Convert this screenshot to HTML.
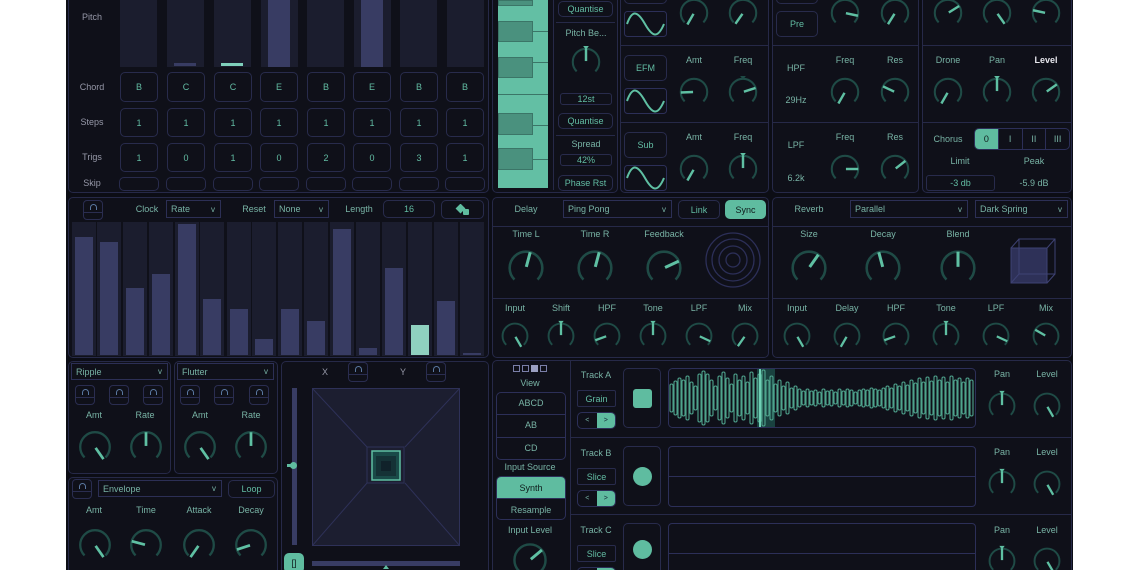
<!DOCTYPE html>
<html><head><meta charset="utf-8"><style>
*{box-sizing:border-box}
html{width:1140px;height:570px;overflow:hidden;background:#fff}
body{margin:0;width:1140px;height:570px;background:#fff;overflow:hidden;font-family:"Liberation Sans",sans-serif;font-size:9px;position:relative}
#app{position:absolute;left:66px;top:0;width:1007px;height:570px;background:#0c0d15}
.a{position:absolute}
.p{position:absolute;border:1px solid #262948;border-radius:5px;background:#0f1019}
.b{position:absolute;border:1px solid #282b4c;border-radius:5px;color:#62bca3;text-align:center;display:flex;align-items:center;justify-content:center;font-size:9px}
.on{background:#5fbca0;color:#0f1a1a;border-color:#5fbca0}
.l{position:absolute;transform:translate(-50%,-50%);white-space:nowrap;color:#78b3a5;font-size:9px}
.g{color:#9698a8}
.w{color:#e8e8ee;font-weight:bold}
.s{position:absolute;border:1px solid #2c2f55;color:#78b3a5;font-size:9px;padding-left:4px;display:flex;align-items:center}
.s:after{content:"v";position:absolute;right:5px;color:#78b3a5;font-size:8px}
.k{position:absolute;overflow:visible}
.k line{stroke:#5fc0a3;stroke-width:2.6;stroke-linecap:butt}
.k .m{fill:#5fc0a3}
.hl{position:absolute;background:#262948}
.mi{position:absolute;width:20px;height:20px;border:1px solid #2a2d50;border-radius:4px}
.mi:before{content:"";position:absolute;left:6px;top:3px;width:5px;height:5px;border:1.5px solid #5a78a0;border-bottom:none;border-radius:4px 4px 0 0}
.mi:after{content:"";position:absolute;left:0;right:0;top:11px;height:7px;border-top:1px solid #2a2d50}
.col{position:absolute;top:222px;height:134px;width:24px;background:#1b1d2e}
.bar{position:absolute;left:3px;right:3px;bottom:1px;background:#383c63}
#clip{position:absolute;left:0;top:0;width:1140px;height:570px;overflow:hidden}
</style></head><body><div id="clip">
<svg width="0" height="0" style="position:absolute"><defs><path id="a" d="M-9.9 9.9A14 14 0 1 1 9.9 9.9" fill="none" stroke="#1f4b46" stroke-width="2.2"/></defs></svg>
<div id="app"></div>

<!-- ===== TOP LEFT SEQUENCER ===== -->
<div class="p" style="left:68px;top:-6px;width:421px;height:199px"></div>
<div class="l g" style="left:92px;top:17px">Pitch</div>
<div class="l g" style="left:92px;top:87px">Chord</div>
<div class="l g" style="left:92px;top:122px">Steps</div>
<div class="l g" style="left:92px;top:157px">Trigs</div>
<div class="l g" style="left:92px;top:183px">Skip</div>
<div class="a" style="left:120px;top:0;width:37px;height:67px;background:#1b1d2e"></div>
<div class="a" style="left:167px;top:0;width:37px;height:67px;background:#1b1d2e"></div>
<div class="a" style="left:214px;top:0;width:37px;height:67px;background:#1b1d2e"></div>
<div class="a" style="left:261px;top:0;width:37px;height:67px;background:#1b1d2e"></div>
<div class="a" style="left:307px;top:0;width:37px;height:67px;background:#1b1d2e"></div>
<div class="a" style="left:354px;top:0;width:37px;height:67px;background:#1b1d2e"></div>
<div class="a" style="left:400px;top:0;width:37px;height:67px;background:#1b1d2e"></div>
<div class="a" style="left:447px;top:0;width:37px;height:67px;background:#1b1d2e"></div>
<div class="a" style="left:268px;top:0;width:22px;height:67px;background:#383c63"></div>
<div class="a" style="left:361px;top:0;width:22px;height:67px;background:#383c63"></div>
<div class="a" style="left:174px;top:63px;width:22px;height:3px;background:#383c63"></div>
<div class="a" style="left:221px;top:63px;width:22px;height:3px;background:#7fd0bb"></div>

<div class="b" style="left:120px;top:72px;width:38px;height:30px">B</div>
<div class="b" style="left:167px;top:72px;width:38px;height:30px">C</div>
<div class="b" style="left:214px;top:72px;width:38px;height:30px">C</div>
<div class="b" style="left:260px;top:72px;width:38px;height:30px">E</div>
<div class="b" style="left:307px;top:72px;width:38px;height:30px">B</div>
<div class="b" style="left:353px;top:72px;width:38px;height:30px">E</div>
<div class="b" style="left:400px;top:72px;width:38px;height:30px">B</div>
<div class="b" style="left:446px;top:72px;width:38px;height:30px">B</div>

<div class="b" style="left:120px;top:108px;width:38px;height:29px">1</div>
<div class="b" style="left:167px;top:108px;width:38px;height:29px">1</div>
<div class="b" style="left:214px;top:108px;width:38px;height:29px">1</div>
<div class="b" style="left:260px;top:108px;width:38px;height:29px">1</div>
<div class="b" style="left:307px;top:108px;width:38px;height:29px">1</div>
<div class="b" style="left:353px;top:108px;width:38px;height:29px">1</div>
<div class="b" style="left:400px;top:108px;width:38px;height:29px">1</div>
<div class="b" style="left:446px;top:108px;width:38px;height:29px">1</div>

<div class="b" style="left:120px;top:143px;width:38px;height:29px">1</div>
<div class="b" style="left:167px;top:143px;width:38px;height:29px">0</div>
<div class="b" style="left:214px;top:143px;width:38px;height:29px">1</div>
<div class="b" style="left:260px;top:143px;width:38px;height:29px">0</div>
<div class="b" style="left:307px;top:143px;width:38px;height:29px">2</div>
<div class="b" style="left:353px;top:143px;width:38px;height:29px">0</div>
<div class="b" style="left:400px;top:143px;width:38px;height:29px">3</div>
<div class="b" style="left:446px;top:143px;width:38px;height:29px">1</div>

<div class="b" style="left:119px;top:177px;width:40px;height:14px"></div>
<div class="b" style="left:166px;top:177px;width:40px;height:14px"></div>
<div class="b" style="left:213px;top:177px;width:40px;height:14px"></div>
<div class="b" style="left:259px;top:177px;width:40px;height:14px"></div>
<div class="b" style="left:306px;top:177px;width:40px;height:14px"></div>
<div class="b" style="left:352px;top:177px;width:40px;height:14px"></div>
<div class="b" style="left:399px;top:177px;width:40px;height:14px"></div>
<div class="b" style="left:445px;top:177px;width:40px;height:14px"></div>

<!-- ===== PIANO ===== -->
<div class="p" style="left:492px;top:-6px;width:126px;height:199px"></div>
<div class="a" style="left:498px;top:0;width:50px;height:188px;background:#63bfa4"></div>
<div class="a" style="left:498px;top:0;width:35px;height:6px;background:#4a917e;border:1px solid #3b7567"></div>
<div class="a" style="left:498px;top:21px;width:35px;height:21px;background:#4a917e;border:1px solid #3b7567"></div>
<div class="a" style="left:498px;top:57px;width:35px;height:21px;background:#4a917e;border:1px solid #3b7567"></div>
<div class="a" style="left:498px;top:113px;width:35px;height:22px;background:#4a917e;border:1px solid #3b7567"></div>
<div class="a" style="left:498px;top:148px;width:35px;height:22px;background:#4a917e;border:1px solid #3b7567"></div>
<div class="a" style="left:533px;top:31px;width:15px;height:1px;background:#3b7567"></div>
<div class="a" style="left:533px;top:62px;width:15px;height:1px;background:#3b7567"></div>
<div class="a" style="left:498px;top:94px;width:50px;height:1px;background:#3b7567"></div>
<div class="a" style="left:533px;top:125px;width:15px;height:1px;background:#3b7567"></div>
<div class="a" style="left:533px;top:159px;width:15px;height:1px;background:#3b7567"></div>
<div class="hl" style="left:553px;top:0;width:1px;height:190px"></div>
<div class="b" style="left:558px;top:1px;width:55px;height:16px">Quantise</div>
<div class="hl" style="left:556px;top:22px;width:59px;height:1px"></div>
<div class="l" style="left:586px;top:33px">Pitch Be...</div>
<svg class="k" style="left:569px;top:45px;width:34px;height:34px" viewBox="-18 -18 36 36"><use href="#a"/><path class="m" d="M-3 -17h6l-3 4z"/><line y1="-1" y2="-14"/></svg>
<div class="b" style="left:560px;top:93px;width:52px;height:12px;border-radius:3px">12st</div>
<div class="b" style="left:558px;top:113px;width:55px;height:16px">Quantise</div>
<div class="hl" style="left:556px;top:135px;width:59px;height:1px"></div>
<div class="l" style="left:586px;top:144px">Spread</div>
<div class="b" style="left:560px;top:154px;width:52px;height:12px;border-radius:3px">42%</div>
<div class="b" style="left:558px;top:175px;width:55px;height:16px">Phase Rst</div>

<!-- ===== OSC ===== -->
<div class="p" style="left:620px;top:-6px;width:149px;height:199px"></div>
<div class="hl" style="left:621px;top:45px;width:147px;height:1px"></div>
<div class="hl" style="left:621px;top:122px;width:147px;height:1px"></div>
<div class="b" style="left:624px;top:-10px;width:43px;height:14px"></div>
<svg class="a" style="left:624px;top:11px" width="43" height="26"><rect x=".5" y=".5" width="42" height="25" rx="3" fill="none" stroke="#2c2f58"/><path d="M3 13C8 -1 13 -1 21 13S34 27 40 13" fill="none" stroke="#5fc0a3" stroke-width="2"/></svg>
<div class="b" style="left:624px;top:55px;width:43px;height:26px">EFM</div>
<svg class="a" style="left:624px;top:88px" width="43" height="26"><rect x=".5" y=".5" width="42" height="25" rx="3" fill="none" stroke="#2c2f58"/><path d="M3 13C8 -1 13 -1 21 13S34 27 40 13" fill="none" stroke="#5fc0a3" stroke-width="2"/></svg>
<div class="b" style="left:624px;top:132px;width:43px;height:26px">Sub</div>
<svg class="a" style="left:624px;top:165px" width="43" height="26"><rect x=".5" y=".5" width="42" height="25" rx="3" fill="none" stroke="#2c2f58"/><path d="M3 13C8 -1 13 -1 21 13S34 27 40 13" fill="none" stroke="#5fc0a3" stroke-width="2"/></svg>
<svg class="k" style="left:677px;top:-4px;width:34px;height:34px" viewBox="-18 -18 36 36"><use href="#a"/><line y1="-1" y2="-14" transform="rotate(-150)"/></svg>
<svg class="k" style="left:726px;top:-4px;width:34px;height:34px" viewBox="-18 -18 36 36"><use href="#a"/><line y1="-1" y2="-14" transform="rotate(-145)"/></svg>
<div class="l" style="left:694px;top:60px">Amt</div><div class="l" style="left:743px;top:60px">Freq</div>
<svg class="k" style="left:677px;top:75px;width:34px;height:34px" viewBox="-18 -18 36 36"><use href="#a"/><line y1="-1" y2="-14" transform="rotate(-92)"/></svg>
<svg class="k" style="left:726px;top:75px;width:34px;height:34px" viewBox="-18 -18 36 36"><use href="#a"/><path d="M-3 -17h6l-3 4z" style="fill:#1f4b46"/><line y1="-1" y2="-14" transform="rotate(72)"/></svg>
<div class="l" style="left:694px;top:137px">Amt</div><div class="l" style="left:743px;top:137px">Freq</div>
<svg class="k" style="left:677px;top:152px;width:34px;height:34px" viewBox="-18 -18 36 36"><use href="#a"/><line y1="-1" y2="-14" transform="rotate(-150)"/></svg>
<svg class="k" style="left:726px;top:152px;width:34px;height:34px" viewBox="-18 -18 36 36"><use href="#a"/><path class="m" d="M-3 -17h6l-3 4z"/><line y1="-1" y2="-14"/></svg>

<!-- ===== FILTER ===== -->
<div class="p" style="left:772px;top:-6px;width:147px;height:199px"></div>
<div class="hl" style="left:773px;top:45px;width:145px;height:1px"></div>
<div class="hl" style="left:773px;top:122px;width:145px;height:1px"></div>
<div class="b" style="left:776px;top:-10px;width:42px;height:14px"></div>
<div class="b" style="left:776px;top:11px;width:42px;height:26px">Pre</div>
<svg class="k" style="left:828px;top:-4px;width:34px;height:34px" viewBox="-18 -18 36 36"><use href="#a"/><line y1="-1" y2="-14" transform="rotate(102)"/></svg>
<svg class="k" style="left:878px;top:-4px;width:34px;height:34px" viewBox="-18 -18 36 36"><use href="#a"/><line y1="-1" y2="-14" transform="rotate(-148)"/></svg>
<div class="l" style="left:796px;top:68px">HPF</div><div class="l" style="left:796px;top:100px">29Hz</div>
<div class="l" style="left:845px;top:60px">Freq</div><div class="l" style="left:895px;top:60px">Res</div>
<svg class="k" style="left:828px;top:75px;width:34px;height:34px" viewBox="-18 -18 36 36"><use href="#a"/><line y1="-1" y2="-14" transform="rotate(-150)"/></svg>
<svg class="k" style="left:878px;top:75px;width:34px;height:34px" viewBox="-18 -18 36 36"><use href="#a"/><line y1="-1" y2="-14" transform="rotate(-65)"/></svg>
<div class="l" style="left:796px;top:145px">LPF</div><div class="l" style="left:796px;top:178px">6.2k</div>
<div class="l" style="left:845px;top:137px">Freq</div><div class="l" style="left:895px;top:137px">Res</div>
<svg class="k" style="left:828px;top:152px;width:34px;height:34px" viewBox="-18 -18 36 36"><use href="#a"/><line y1="-1" y2="-14" transform="rotate(90)"/></svg>
<svg class="k" style="left:878px;top:152px;width:34px;height:34px" viewBox="-18 -18 36 36"><use href="#a"/><line y1="-1" y2="-14" transform="rotate(52)"/></svg>

<!-- ===== OUTPUT ===== -->
<div class="p" style="left:922px;top:-6px;width:150px;height:199px"></div>
<div class="hl" style="left:923px;top:45px;width:148px;height:1px"></div>
<div class="hl" style="left:923px;top:122px;width:148px;height:1px"></div>
<svg class="k" style="left:931px;top:-4px;width:34px;height:34px" viewBox="-18 -18 36 36"><use href="#a"/><line y1="-1" y2="-14" transform="rotate(58)"/></svg>
<svg class="k" style="left:980px;top:-4px;width:34px;height:34px" viewBox="-18 -18 36 36"><use href="#a"/><line y1="-1" y2="-14" transform="rotate(145)"/></svg>
<svg class="k" style="left:1029px;top:-4px;width:34px;height:34px" viewBox="-18 -18 36 36"><use href="#a"/><line y1="-1" y2="-14" transform="rotate(-78)"/></svg>
<div class="l" style="left:948px;top:60px">Drone</div><div class="l" style="left:997px;top:60px">Pan</div><div class="l w" style="left:1046px;top:60px">Level</div>
<svg class="k" style="left:931px;top:75px;width:34px;height:34px" viewBox="-18 -18 36 36"><use href="#a"/><line y1="-1" y2="-14" transform="rotate(-150)"/></svg>
<svg class="k" style="left:980px;top:75px;width:34px;height:34px" viewBox="-18 -18 36 36"><use href="#a"/><path class="m" d="M-3 -17h6l-3 4z"/><line y1="-1" y2="-14"/></svg>
<svg class="k" style="left:1029px;top:75px;width:34px;height:34px" viewBox="-18 -18 36 36"><use href="#a"/><line y1="-1" y2="-14" transform="rotate(55)"/></svg>
<div class="l" style="left:948px;top:139px">Chorus</div>
<div class="a" style="left:974px;top:128px;width:96px;height:22px;border:1px solid #2c2f58;border-radius:5px;display:flex;color:#78b3a5;font-size:9px;overflow:hidden">
<div style="flex:1;background:#5fbca0;color:#0f1a1a;display:flex;align-items:center;justify-content:center">0</div>
<div style="flex:1;border-left:1px solid #2c2f58;display:flex;align-items:center;justify-content:center">I</div>
<div style="flex:1;border-left:1px solid #2c2f58;display:flex;align-items:center;justify-content:center">II</div>
<div style="flex:1;border-left:1px solid #2c2f58;display:flex;align-items:center;justify-content:center">III</div></div>
<div class="l" style="left:960px;top:161px">Limit</div><div class="l" style="left:1034px;top:161px">Peak</div>
<div class="b" style="left:926px;top:175px;width:69px;height:16px;border-radius:3px">-3 db</div>
<div class="l" style="left:1034px;top:183px">-5.9 dB</div>

<!-- ===== LFO ===== -->
<div class="p" style="left:68px;top:197px;width:421px;height:161px"></div>
<div class="mi" style="left:83px;top:200px"></div>
<div class="l" style="left:147px;top:209px">Clock</div>
<div class="s" style="left:166px;top:200px;width:55px;height:18px">Rate</div>
<div class="l" style="left:254px;top:209px">Reset</div>
<div class="s" style="left:274px;top:200px;width:55px;height:18px">None</div>
<div class="l" style="left:359px;top:209px">Length</div>
<div class="b" style="left:383px;top:200px;width:52px;height:18px">16</div>
<div class="b" style="left:441px;top:200px;width:43px;height:19px"><svg width="16" height="12"><rect x="2" y="1" width="7" height="7" transform="rotate(45 5.5 4.5)" fill="#5fbca0"/><rect x="8" y="5" width="6" height="6" rx="1" fill="#5fbca0"/></svg></div>
<div class="col" style="left:72px"><div class="bar" style="top:15px"></div></div>
<div class="col" style="left:97px"><div class="bar" style="top:20px"></div></div>
<div class="col" style="left:123px"><div class="bar" style="top:66px"></div></div>
<div class="col" style="left:149px"><div class="bar" style="top:52px"></div></div>
<div class="col" style="left:175px"><div class="bar" style="top:2px"></div></div>
<div class="col" style="left:200px"><div class="bar" style="top:77px"></div></div>
<div class="col" style="left:227px"><div class="bar" style="top:87px"></div></div>
<div class="col" style="left:252px"><div class="bar" style="top:117px"></div></div>
<div class="col" style="left:278px"><div class="bar" style="top:87px"></div></div>
<div class="col" style="left:304px"><div class="bar" style="top:99px"></div></div>
<div class="col" style="left:330px"><div class="bar" style="top:7px"></div></div>
<div class="col" style="left:356px"><div class="bar" style="top:126px"></div></div>
<div class="col" style="left:382px"><div class="bar" style="top:46px"></div></div>
<div class="col" style="left:408px"><div class="bar" style="top:103px;background:#8fd0bf"></div></div>
<div class="col" style="left:434px"><div class="bar" style="top:79px"></div></div>
<div class="col" style="left:460px"><div class="bar" style="top:131px"></div></div>

<!-- ===== DELAY ===== -->
<div class="p" style="left:492px;top:197px;width:277px;height:161px"></div>
<div class="hl" style="left:493px;top:226px;width:275px;height:1px"></div>
<div class="hl" style="left:493px;top:298px;width:275px;height:1px"></div>
<div class="l" style="left:526px;top:209px">Delay</div>
<div class="s" style="left:563px;top:200px;width:109px;height:18px">Ping Pong</div>
<div class="b" style="left:678px;top:200px;width:42px;height:19px">Link</div>
<div class="b on" style="left:725px;top:200px;width:41px;height:19px">Sync</div>
<div class="l" style="left:526px;top:234px">Time L</div><div class="l" style="left:595px;top:234px">Time R</div><div class="l" style="left:664px;top:234px">Feedback</div>
<svg class="k" style="left:505px;top:247px;width:42px;height:42px" viewBox="-18 -18 36 36"><use href="#a"/><line y1="-1" y2="-14" transform="rotate(15)"/></svg>
<svg class="k" style="left:574px;top:247px;width:42px;height:42px" viewBox="-18 -18 36 36"><use href="#a"/><line y1="-1" y2="-14" transform="rotate(15)"/></svg>
<svg class="k" style="left:643px;top:247px;width:42px;height:42px" viewBox="-18 -18 36 36"><use href="#a"/><line y1="-1" y2="-14" transform="rotate(65)"/></svg>
<svg class="a" style="left:704px;top:231px" width="58" height="58"><g fill="none" stroke="#2c2f58" stroke-width="1.3"><circle cx="29" cy="29" r="27"/><circle cx="29" cy="29" r="21"/><circle cx="29" cy="29" r="14"/><circle cx="29" cy="29" r="7"/></g></svg>
<div class="l" style="left:515px;top:308px">Input</div><div class="l" style="left:561px;top:308px">Shift</div><div class="l" style="left:607px;top:308px">HPF</div><div class="l" style="left:653px;top:308px">Tone</div><div class="l" style="left:699px;top:308px">LPF</div><div class="l" style="left:745px;top:308px">Mix</div>
<svg class="k" style="left:499px;top:320px;width:32px;height:32px" viewBox="-18 -18 36 36"><use href="#a"/><line y1="-1" y2="-14" transform="rotate(150)"/></svg>
<svg class="k" style="left:545px;top:320px;width:32px;height:32px" viewBox="-18 -18 36 36"><use href="#a"/><path class="m" d="M-3 -17h6l-3 4z"/><line y1="-1" y2="-14"/></svg>
<svg class="k" style="left:591px;top:320px;width:32px;height:32px" viewBox="-18 -18 36 36"><use href="#a"/><line y1="-1" y2="-14" transform="rotate(-110)"/></svg>
<svg class="k" style="left:637px;top:320px;width:32px;height:32px" viewBox="-18 -18 36 36"><use href="#a"/><path class="m" d="M-3 -17h6l-3 4z"/><line y1="-1" y2="-14"/></svg>
<svg class="k" style="left:683px;top:320px;width:32px;height:32px" viewBox="-18 -18 36 36"><use href="#a"/><line y1="-1" y2="-14" transform="rotate(115)"/></svg>
<svg class="k" style="left:729px;top:320px;width:32px;height:32px" viewBox="-18 -18 36 36"><use href="#a"/><line y1="-1" y2="-14" transform="rotate(-145)"/></svg>

<!-- ===== REVERB ===== -->
<div class="p" style="left:772px;top:197px;width:300px;height:161px"></div>
<div class="hl" style="left:773px;top:226px;width:298px;height:1px"></div>
<div class="hl" style="left:773px;top:298px;width:298px;height:1px"></div>
<div class="l" style="left:809px;top:209px">Reverb</div>
<div class="s" style="left:850px;top:200px;width:118px;height:18px">Parallel</div>
<div class="s" style="left:975px;top:200px;width:93px;height:18px">Dark Spring</div>
<div class="l" style="left:809px;top:234px">Size</div><div class="l" style="left:883px;top:234px">Decay</div><div class="l" style="left:958px;top:234px">Blend</div>
<svg class="k" style="left:788px;top:247px;width:42px;height:42px" viewBox="-18 -18 36 36"><use href="#a"/><line y1="-1" y2="-14" transform="rotate(35)"/></svg>
<svg class="k" style="left:862px;top:247px;width:42px;height:42px" viewBox="-18 -18 36 36"><use href="#a"/><line y1="-1" y2="-14" transform="rotate(-15)"/></svg>
<svg class="k" style="left:937px;top:247px;width:42px;height:42px" viewBox="-18 -18 36 36"><use href="#a"/><line y1="-1" y2="-14"/></svg>
<svg class="a" style="left:1009px;top:237px" width="48" height="48"><g stroke="#3e4274" stroke-width="1" fill="none"><rect x="2" y="11" width="36" height="35" fill="#2e3158"/><rect x="10" y="2" width="36" height="35"/><path d="M2 11L10 2M38 11L46 2M38 46L46 37M2 46L10 37"/></g></svg>
<div class="l" style="left:797px;top:308px">Input</div><div class="l" style="left:847px;top:308px">Delay</div><div class="l" style="left:896px;top:308px">HPF</div><div class="l" style="left:946px;top:308px">Tone</div><div class="l" style="left:996px;top:308px">LPF</div><div class="l" style="left:1046px;top:308px">Mix</div>
<svg class="k" style="left:781px;top:320px;width:32px;height:32px" viewBox="-18 -18 36 36"><use href="#a"/><line y1="-1" y2="-14" transform="rotate(150)"/></svg>
<svg class="k" style="left:831px;top:320px;width:32px;height:32px" viewBox="-18 -18 36 36"><use href="#a"/><line y1="-1" y2="-14" transform="rotate(-150)"/></svg>
<svg class="k" style="left:880px;top:320px;width:32px;height:32px" viewBox="-18 -18 36 36"><use href="#a"/><line y1="-1" y2="-14" transform="rotate(-110)"/></svg>
<svg class="k" style="left:930px;top:320px;width:32px;height:32px" viewBox="-18 -18 36 36"><use href="#a"/><path class="m" d="M-3 -17h6l-3 4z"/><line y1="-1" y2="-14"/></svg>
<svg class="k" style="left:980px;top:320px;width:32px;height:32px" viewBox="-18 -18 36 36"><use href="#a"/><line y1="-1" y2="-14" transform="rotate(115)"/></svg>
<svg class="k" style="left:1030px;top:320px;width:32px;height:32px" viewBox="-18 -18 36 36"><use href="#a"/><line y1="-1" y2="-14" transform="rotate(-60)"/></svg>

<!-- ===== RIPPLE / FLUTTER ===== -->
<div class="p" style="left:68px;top:361px;width:103px;height:113px"></div>
<div class="p" style="left:174px;top:361px;width:104px;height:113px"></div>
<div class="s" style="left:71px;top:363px;width:97px;height:17px">Ripple</div>
<div class="s" style="left:177px;top:363px;width:97px;height:17px">Flutter</div>
<div class="mi" style="left:75px;top:385px"></div><div class="mi" style="left:109px;top:385px"></div><div class="mi" style="left:143px;top:385px"></div>
<div class="mi" style="left:180px;top:385px"></div><div class="mi" style="left:214px;top:385px"></div><div class="mi" style="left:249px;top:385px"></div>
<div class="l" style="left:94px;top:415px">Amt</div><div class="l" style="left:145px;top:415px">Rate</div>
<div class="l" style="left:200px;top:415px">Amt</div><div class="l" style="left:251px;top:415px">Rate</div>
<svg class="k" style="left:76px;top:428px;width:38px;height:38px" viewBox="-18 -18 36 36"><use href="#a"/><line y1="-1" y2="-14" transform="rotate(145)"/></svg>
<svg class="k" style="left:127px;top:428px;width:38px;height:38px" viewBox="-18 -18 36 36"><use href="#a"/><line y1="-1" y2="-14"/></svg>
<svg class="k" style="left:181px;top:428px;width:38px;height:38px" viewBox="-18 -18 36 36"><use href="#a"/><line y1="-1" y2="-14" transform="rotate(145)"/></svg>
<svg class="k" style="left:232px;top:428px;width:38px;height:38px" viewBox="-18 -18 36 36"><use href="#a"/><line y1="-1" y2="-14"/></svg>

<!-- ===== ENVELOPE ===== -->
<div class="p" style="left:68px;top:477px;width:210px;height:100px"></div>
<div class="mi" style="left:72px;top:479px"></div>
<div class="s" style="left:98px;top:480px;width:124px;height:17px">Envelope</div>
<div class="b" style="left:228px;top:480px;width:47px;height:18px">Loop</div>
<div class="l" style="left:94px;top:510px">Amt</div><div class="l" style="left:146px;top:510px">Time</div><div class="l" style="left:199px;top:510px">Attack</div><div class="l" style="left:251px;top:510px">Decay</div>
<svg class="k" style="left:76px;top:526px;width:38px;height:38px" viewBox="-18 -18 36 36"><use href="#a"/><line y1="-1" y2="-14" transform="rotate(145)"/></svg>
<svg class="k" style="left:127px;top:526px;width:38px;height:38px" viewBox="-18 -18 36 36"><use href="#a"/><line y1="-1" y2="-14" transform="rotate(-75)"/></svg>
<svg class="k" style="left:180px;top:526px;width:38px;height:38px" viewBox="-18 -18 36 36"><use href="#a"/><line y1="-1" y2="-14" transform="rotate(-145)"/></svg>
<svg class="k" style="left:232px;top:526px;width:38px;height:38px" viewBox="-18 -18 36 36"><use href="#a"/><line y1="-1" y2="-14" transform="rotate(-108)"/></svg>

<!-- ===== XY ===== -->
<div class="p" style="left:281px;top:361px;width:208px;height:215px"></div>
<div class="l g" style="left:325px;top:372px">X</div>
<div class="mi" style="left:348px;top:362px"></div>
<div class="l g" style="left:403px;top:372px">Y</div>
<div class="mi" style="left:426px;top:362px"></div>
<div class="a" style="left:292px;top:388px;width:5px;height:157px;background:#383c63"></div>
<div class="a" style="left:290px;top:462px;width:7px;height:7px;border-radius:50%;background:#5fbca0"></div>
<div class="a" style="left:287px;top:464px;width:4px;height:3px;background:#5fbca0"></div>
<svg class="a" style="left:312px;top:388px" width="148" height="158"><rect x=".5" y=".5" width="147" height="157" fill="#1c1e30" stroke="#2e3158"/><path d="M0 0L55 59M148 0L93 59M0 158L55 95M148 158L93 95" stroke="#2e3158"/><rect x="55" y="59" width="37" height="36" fill="#1c1e30" stroke="#2e3158"/><rect x="60" y="63" width="28" height="29" fill="#1a4a48" stroke="#5fc0a3" stroke-width="1.5"/><rect x="64" y="68" width="20" height="20" fill="#153236"/><rect x="69" y="73" width="10" height="10" fill="#10222a"/></svg>
<div class="b on" style="left:284px;top:553px;width:20px;height:20px;font-size:9px">[]</div>
<div class="a" style="left:312px;top:561px;width:148px;height:5px;background:#383c63"></div>
<div class="a" style="left:383px;top:562px;width:0;height:0;border:3px solid transparent;border-bottom:4px solid #5fbca0"></div>

<!-- ===== SAMPLER ===== -->
<div class="p" style="left:492px;top:360px;width:580px;height:216px"></div>
<div class="hl" style="left:570px;top:361px;width:1px;height:209px"></div>
<div class="a" style="left:513px;top:365px;width:7px;height:7px;border:1px solid #7a7fa8"></div>
<div class="a" style="left:522px;top:365px;width:7px;height:7px;border:1px solid #7a7fa8"></div>
<div class="a" style="left:531px;top:365px;width:7px;height:7px;background:#9a9fc0"></div>
<div class="a" style="left:540px;top:365px;width:7px;height:7px;border:1px solid #7a7fa8"></div>
<div class="l" style="left:530px;top:383px">View</div>
<div class="a" style="left:496px;top:392px;width:70px;height:68px;border:1px solid #2c2f58;border-radius:5px"></div>
<div class="l" style="left:531px;top:403px">ABCD</div>
<div class="hl" style="left:497px;top:414px;width:68px;height:1px;background:#2c2f58"></div>
<div class="l" style="left:531px;top:425px">AB</div>
<div class="hl" style="left:497px;top:437px;width:68px;height:1px;background:#2c2f58"></div>
<div class="l" style="left:531px;top:448px">CD</div>
<div class="l" style="left:530px;top:467px">Input Source</div>
<div class="a" style="left:496px;top:476px;width:70px;height:44px;border:1px solid #2c2f58;border-radius:5px;overflow:hidden"><div style="height:21px;background:#5fbca0;color:#0f1a1a;display:flex;align-items:center;justify-content:center">Synth</div><div style="height:22px;display:flex;align-items:center;justify-content:center;color:#78b3a5;border-top:1px solid #2c2f58">Resample</div></div>
<div class="l" style="left:530px;top:530px">Input Level</div>
<svg class="k" style="left:510px;top:540px;width:40px;height:40px" viewBox="-18 -18 36 36"><use href="#a"/><line y1="-1" y2="-14" transform="rotate(50)"/></svg>

<div class="hl" style="left:571px;top:437px;width:500px;height:1px"></div>
<div class="hl" style="left:571px;top:514px;width:500px;height:1px"></div>

<!-- Track A -->
<div class="l" style="left:596px;top:375px">Track A</div>
<div class="b" style="left:577px;top:390px;width:39px;height:17px;border-radius:2px">Grain</div>
<div class="a" style="left:577px;top:412px;width:39px;height:17px;border:1px solid #2c2f58;border-radius:5px;overflow:hidden;display:flex;font-size:7px;color:#78b3a5"><div style="flex:1;display:flex;align-items:center;justify-content:center">&lt;</div><div style="flex:1;background:#5fbca0;color:#123;display:flex;align-items:center;justify-content:center">&gt;</div></div>
<div class="b" style="left:623px;top:368px;width:38px;height:60px"><div style="width:19px;height:19px;background:#5fbca0;border-radius:3px"></div></div>
<svg class="a" style="left:668px;top:368px" width="309" height="61">
<rect x=".5" y=".5" width="307" height="59" rx="4" fill="none" stroke="#2c2f58"/>
<rect x="89" y="1" width="18" height="58" fill="#1b4744" opacity=".9"/>
<g fill="none" stroke="#4fa38d" stroke-width="1.1">
<rect x="2" y="16" width="3" height="28" rx="1.5"/><rect x="6" y="13" width="3" height="34" rx="1.5"/><rect x="10" y="10" width="3" height="40" rx="1.5"/><rect x="14" y="12" width="3" height="36" rx="1.5"/><rect x="18" y="8" width="3" height="44" rx="1.5"/><rect x="22" y="14" width="3" height="32" rx="1.5"/><rect x="26" y="18" width="3" height="24" rx="1.5"/><rect x="30" y="6" width="3" height="48" rx="1.5"/><rect x="34" y="3" width="3" height="54" rx="1.5"/><rect x="38" y="6" width="3" height="48" rx="1.5"/><rect x="42" y="12" width="3" height="36" rx="1.5"/><rect x="46" y="18" width="3" height="24" rx="1.5"/><rect x="50" y="8" width="3" height="44" rx="1.5"/><rect x="54" y="4" width="3" height="52" rx="1.5"/><rect x="58" y="10" width="3" height="40" rx="1.5"/><rect x="62" y="16" width="3" height="28" rx="1.5"/><rect x="66" y="6" width="3" height="48" rx="1.5"/><rect x="70" y="12" width="3" height="36" rx="1.5"/><rect x="74" y="8" width="3" height="44" rx="1.5"/><rect x="78" y="14" width="3" height="32" rx="1.5"/><rect x="82" y="4" width="3" height="52" rx="1.5"/><rect x="86" y="10" width="3" height="40" rx="1.5"/><rect x="90" y="6" width="3" height="48" rx="1.5"/><rect x="94" y="2" width="3" height="56" rx="1.5"/><rect x="98" y="12" width="3" height="36" rx="1.5"/><rect x="102" y="8" width="3" height="44" rx="1.5"/><rect x="106" y="16" width="3" height="28" rx="1.5"/><rect x="110" y="12" width="3" height="36" rx="1.5"/><rect x="114" y="18" width="3" height="24" rx="1.5"/><rect x="118" y="14" width="3" height="32" rx="1.5"/><rect x="122" y="20" width="3" height="20" rx="1.5"/><rect x="126" y="18" width="3" height="24" rx="1.5"/><rect x="130" y="21" width="3" height="18" rx="1.5"/><rect x="134" y="23" width="3" height="14" rx="1.5"/><rect x="138" y="21" width="3" height="18" rx="1.5"/><rect x="142" y="23" width="3" height="14" rx="1.5"/><rect x="146" y="22" width="3" height="16" rx="1.5"/><rect x="150" y="24" width="3" height="12" rx="1.5"/><rect x="154" y="21" width="3" height="18" rx="1.5"/><rect x="158" y="23" width="3" height="14" rx="1.5"/><rect x="162" y="22" width="3" height="16" rx="1.5"/><rect x="166" y="24" width="3" height="12" rx="1.5"/><rect x="170" y="21" width="3" height="18" rx="1.5"/><rect x="174" y="23" width="3" height="14" rx="1.5"/><rect x="178" y="21" width="3" height="18" rx="1.5"/><rect x="182" y="22" width="3" height="16" rx="1.5"/><rect x="186" y="24" width="3" height="12" rx="1.5"/><rect x="190" y="22" width="3" height="16" rx="1.5"/><rect x="194" y="21" width="3" height="18" rx="1.5"/><rect x="198" y="22" width="3" height="16" rx="1.5"/><rect x="202" y="20" width="3" height="20" rx="1.5"/><rect x="206" y="21" width="3" height="18" rx="1.5"/><rect x="210" y="22" width="3" height="16" rx="1.5"/><rect x="214" y="20" width="3" height="20" rx="1.5"/><rect x="218" y="18" width="3" height="24" rx="1.5"/><rect x="222" y="20" width="3" height="20" rx="1.5"/><rect x="226" y="16" width="3" height="28" rx="1.5"/><rect x="230" y="18" width="3" height="24" rx="1.5"/><rect x="234" y="14" width="3" height="32" rx="1.5"/><rect x="238" y="17" width="3" height="26" rx="1.5"/><rect x="242" y="12" width="3" height="36" rx="1.5"/><rect x="246" y="15" width="3" height="30" rx="1.5"/><rect x="250" y="10" width="3" height="40" rx="1.5"/><rect x="254" y="14" width="3" height="32" rx="1.5"/><rect x="258" y="9" width="3" height="42" rx="1.5"/><rect x="262" y="13" width="3" height="34" rx="1.5"/><rect x="266" y="8" width="3" height="44" rx="1.5"/><rect x="270" y="12" width="3" height="36" rx="1.5"/><rect x="274" y="9" width="3" height="42" rx="1.5"/><rect x="278" y="14" width="3" height="32" rx="1.5"/><rect x="282" y="8" width="3" height="44" rx="1.5"/><rect x="286" y="12" width="3" height="36" rx="1.5"/><rect x="290" y="10" width="3" height="40" rx="1.5"/><rect x="294" y="14" width="3" height="32" rx="1.5"/><rect x="298" y="10" width="3" height="40" rx="1.5"/><rect x="302" y="12" width="3" height="36" rx="1.5"/>
</g><rect x="91" y="1" width="2" height="58" fill="#6fd0b5"/></svg>
<div class="l" style="left:1002px;top:374px">Pan</div><div class="l" style="left:1047px;top:374px">Level</div>
<svg class="k" style="left:986px;top:390px;width:32px;height:32px" viewBox="-18 -18 36 36"><use href="#a"/><path class="m" d="M-3 -17h6l-3 4z"/><line y1="-1" y2="-14"/></svg>
<svg class="k" style="left:1031px;top:390px;width:32px;height:32px" viewBox="-18 -18 36 36"><use href="#a"/><line y1="-1" y2="-14" transform="rotate(150)"/></svg>

<!-- Track B -->
<div class="l" style="left:596px;top:453px">Track B</div>
<div class="b" style="left:577px;top:468px;width:39px;height:17px;border-radius:2px">Slice</div>
<div class="a" style="left:577px;top:490px;width:39px;height:17px;border:1px solid #2c2f58;border-radius:5px;overflow:hidden;display:flex;font-size:7px;color:#78b3a5"><div style="flex:1;display:flex;align-items:center;justify-content:center">&lt;</div><div style="flex:1;background:#5fbca0;color:#123;display:flex;align-items:center;justify-content:center">&gt;</div></div>
<div class="b" style="left:623px;top:446px;width:38px;height:60px"><div style="width:19px;height:19px;background:#5fbca0;border-radius:50%"></div></div>
<div class="a" style="left:668px;top:446px;width:308px;height:61px;border:1px solid #2c2f58;border-radius:4px"><div style="position:absolute;left:0;right:0;top:29px;height:1px;background:#2c2f58"></div></div>
<div class="l" style="left:1002px;top:452px">Pan</div><div class="l" style="left:1047px;top:452px">Level</div>
<svg class="k" style="left:986px;top:468px;width:32px;height:32px" viewBox="-18 -18 36 36"><use href="#a"/><path class="m" d="M-3 -17h6l-3 4z"/><line y1="-1" y2="-14"/></svg>
<svg class="k" style="left:1031px;top:468px;width:32px;height:32px" viewBox="-18 -18 36 36"><use href="#a"/><line y1="-1" y2="-14" transform="rotate(150)"/></svg>

<!-- Track C -->
<div class="l" style="left:596px;top:530px">Track C</div>
<div class="b" style="left:577px;top:545px;width:39px;height:17px;border-radius:2px">Slice</div>
<div class="a" style="left:577px;top:567px;width:39px;height:17px;border:1px solid #2c2f58;border-radius:5px;overflow:hidden;display:flex"><div style="flex:1"></div><div style="flex:1;background:#5fbca0"></div></div>
<div class="b" style="left:623px;top:523px;width:38px;height:60px"><div style="width:19px;height:19px;background:#5fbca0;border-radius:50%;margin-top:-8px"></div></div>
<div class="a" style="left:668px;top:523px;width:308px;height:61px;border:1px solid #2c2f58;border-radius:4px"><div style="position:absolute;left:0;right:0;top:29px;height:1px;background:#2c2f58"></div></div>
<div class="l" style="left:1002px;top:530px">Pan</div><div class="l" style="left:1047px;top:530px">Level</div>
<svg class="k" style="left:986px;top:545px;width:32px;height:32px" viewBox="-18 -18 36 36"><use href="#a"/><path class="m" d="M-3 -17h6l-3 4z"/><line y1="-1" y2="-14"/></svg>
<svg class="k" style="left:1031px;top:545px;width:32px;height:32px" viewBox="-18 -18 36 36"><use href="#a"/><line y1="-1" y2="-14" transform="rotate(150)"/></svg>
</div></body></html>
